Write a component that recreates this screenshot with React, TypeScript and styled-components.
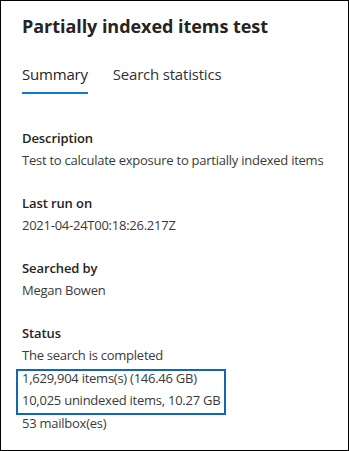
import styled, { createGlobalStyle } from "styled-components";

const GlobalStyle = createGlobalStyle`
  html, body {
    margin: 0;
    padding: 0;
    background: #ffffff;
  }
  * {
    box-sizing: border-box;
  }
`;

const Panel = styled.div`
  width: 349px;
  height: 451px;
  border: 1px solid #000000;
  padding: 11px 21px 0;
  font-family: "Open Sans", "Noto Sans", sans-serif;
  color: #323130;
  background: #ffffff;
  overflow: hidden;
`;

const Title = styled.h1`
  margin: 0;
  font-size: 18px;
  line-height: 28px;
  font-weight: 700;
  letter-spacing: -0.05px;
  color: #252423;
`;

const TabBar = styled.div`
  display: flex;
  gap: 25px;
  margin-top: 23px;
`;

const Tab = styled.div<{ $active?: boolean }>`
  font-size: 15px;
  line-height: 22px;
  letter-spacing: -0.2px;
  padding-bottom: 7px;
  color: ${(p) => (p.$active ? "#252423" : "#323130")};
  border-bottom: 2px solid ${(p) => (p.$active ? "#0f78d4" : "transparent")};
`;

const Sections = styled.div`
  display: flex;
  flex-direction: column;
  gap: 21px;
  margin-top: 33px;
`;

const Section = styled.section`
  display: flex;
  flex-direction: column;
`;

const Label = styled.div`
  font-size: 13px;
  line-height: 22px;
  font-weight: 600;
  letter-spacing: -0.1px;
  color: #252423;
`;

const Value = styled.div`
  font-size: 13px;
  line-height: 22px;
  letter-spacing: -0.25px;
  color: #3b3a39;
  white-space: nowrap;
`;

// the blue annotation box drawn over the two count lines
const Highlight = styled.div`
  position: relative;
  width: fit-content;
  margin: 1px 0;

  &::after {
    content: "";
    position: absolute;
    top: 2px;
    bottom: -4px;
    left: -6px;
    right: -6px;
    border: 2px solid #1068b5;
    pointer-events: none;
  }
`;

const sections = [
  { label: "Description", values: ["Test to calculate exposure to partially indexed items"] },
  { label: "Last run on", values: ["2021-04-24T00:18:26.217Z"] },
  { label: "Searched by", values: ["Megan Bowen"] },
];

export default function App() {
  return (
    <>
      <GlobalStyle />
      <Panel>
        <Title>Partially indexed items test</Title>
        <TabBar>
          <Tab $active>Summary</Tab>
          <Tab>Search statistics</Tab>
        </TabBar>
        <Sections>
          {sections.map((s) => (
            <Section key={s.label}>
              <Label>{s.label}</Label>
              {s.values.map((v) => (
                <Value key={v}>{v}</Value>
              ))}
            </Section>
          ))}
          <Section>
            <Label>Status</Label>
            <Value>The search is completed</Value>
            <Highlight>
              <Value>1,629,904 items(s) (146.46 GB)</Value>
              <Value>10,025 unindexed items, 10.27 GB</Value>
            </Highlight>
            <Value>53 mailbox(es)</Value>
          </Section>
        </Sections>
      </Panel>
    </>
  );
}
